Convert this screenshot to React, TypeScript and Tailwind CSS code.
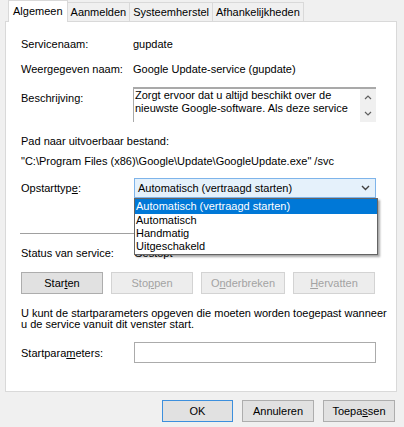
import React from 'react'

const tabs = ['Algemeen', 'Aanmelden', 'Systeemherstel', 'Afhankelijkheden']

function Btn({ children, disabled, def, w }: { children: React.ReactNode; disabled?: boolean; def?: boolean; w: string }) {
  return (
    <div
      className={`${w} h-[22px] flex items-center justify-center border ${
        disabled
          ? 'bg-[#EDEDED] border-[#D3D3D3] text-[#A3A3A3]'
          : def
          ? 'bg-[#E1E1E1] border-[#3C8FDD] text-black'
          : 'bg-[#E1E1E1] border-[#ADADAD] text-black'
      }`}>
      {children}
    </div>
  )
}

export default function App() {
  return (
    <div
      className="w-[404px] h-[427px] bg-[#F0F0F0] text-[11px] leading-[14px] text-black overflow-hidden"
      style={{ fontFamily: '"Liberation Sans", Arial, sans-serif' }}>
      {/* tabs */}
      <div className="flex items-end h-[22px] pl-[8px] relative z-10">
        {tabs.map((t, i) =>
          i === 0 ? (
            <div
              key={t}
              className="h-[22px] px-[4px] bg-white border border-b-0 border-[#D9D9D9] flex items-start pt-[3px]">
              {t}
            </div>
          ) : (
            <div
              key={t}
              className="h-[19px] px-[3px] bg-[#F0F0F0] border border-l-0 border-b-0 border-[#D9D9D9] flex items-center mb-[1px]">
              {t}
            </div>
          )
        )}
      </div>

      {/* panel */}
      <div className="relative mx-[5px] mt-[-1px] w-[392px] h-[371px] bg-white border border-[#D9D9D9] pl-[15px] pr-[19px]">
        <div className="flex mt-[15px]">
          <div className="w-[112px]">Servicenaam:</div>
          <div>gupdate</div>
        </div>
        <div className="flex mt-[11px]">
          <div className="w-[112px]">Weergegeven naam:</div>
          <div>Google Update-service (gupdate)</div>
        </div>
        <div className="flex mt-[11px]">
          <div className="w-[112px] pt-[4px]">Beschrijving:</div>
          <div className="w-[243px] h-[35px] flex border-t-2 border-l border-[#A9A9A9] bg-white">
            <div className="flex-1 pl-[1px] leading-[13px]">
              Zorgt ervoor dat u altijd beschikt over de
              <br />
              nieuwste Google-software. Als deze service
            </div>
            <div className="w-[16px] bg-[#F0F0F0] flex flex-col items-center justify-around">
              <svg width="8" height="5" viewBox="0 0 8 5">
                <path d="M1 4 L4 1 L7 4" fill="none" stroke="#606060" strokeWidth="1.2" />
              </svg>
              <svg width="8" height="5" viewBox="0 0 8 5">
                <path d="M1 1 L4 4 L7 1" fill="none" stroke="#606060" strokeWidth="1.2" />
              </svg>
            </div>
          </div>
        </div>
        <div className="mt-[12px]">Pad naar uitvoerbaar bestand:</div>
        <div className="mt-[6px]">"C:\Program Files (x86)\Google\Update\GoogleUpdate.exe" /svc</div>
        <div className="flex mt-[10px]">
          <div className="w-[113px] pt-[3px]">
            Opstarttyp<span className="underline">e</span>:
          </div>
          <div className="relative">
            <div className="w-[242px] h-[20px] bg-[#E5F1FB] border border-[#7EB4EA] flex items-center pl-[3px] pr-[5px]">
              <div className="flex-1">Automatisch (vertraagd starten)</div>
              <svg width="9" height="6" viewBox="0 0 9 6">
                <path d="M1 1 L4.5 4.5 L8 1" fill="none" stroke="#404040" strokeWidth="1.4" />
              </svg>
            </div>
            {/* open list */}
            <div className="absolute left-0 top-[20px] w-[244px] bg-white border border-[#646464] shadow-[2px_2px_2px_rgba(0,0,0,0.35)] z-20 leading-[13px]">
              <div className="bg-[#0078D7] text-white h-[15px] pl-[1px] pt-[1px]">Automatisch (vertraagd starten)</div>
              <div className="pl-[1px]">Automatisch</div>
              <div className="pl-[1px]">Handmatig</div>
              <div className="pl-[1px] pb-[1px]">Uitgeschakeld</div>
            </div>
          </div>
        </div>
        <div className="mt-[35px] h-[1px] bg-[#A0A0A0] w-[356px] ml-[-1px]" />
        <div className="flex mt-[12px]">
          <div className="w-[113px]">Status van service:</div>
          <div>Gestopt</div>
        </div>
        <div className="flex mt-[12px] gap-[8px]">
          <Btn w="w-[82px]">
            Star<span className="underline">t</span>en
          </Btn>
          <Btn w="w-[82px]" disabled>
            Sto<span className="underline">p</span>pen
          </Btn>
          <Btn w="w-[84px]" disabled>
            O<span className="underline">n</span>derbreken
          </Btn>
          <Btn w="w-[82px]" disabled>
            <span className="underline">H</span>ervatten
          </Btn>
        </div>
        <div className="mt-[14px] leading-[11px] whitespace-nowrap">
          U kunt de startparameters opgeven die moeten worden toegepast wanneer
          <br />u de service vanuit dit venster start.
        </div>
        <div className="flex items-center mt-[12px]">
          <div className="w-[113px]">
            Startpara<span className="underline">m</span>eters:
          </div>
          <div className="w-[242px] h-[21px] bg-white border border-[#ABABAB]" />
        </div>
      </div>

      {/* dialog buttons */}
      <div className="flex justify-end gap-[9px] pr-[9px] mt-[8px]">
        <Btn w="w-[71px]" def>
          OK
        </Btn>
        <Btn w="w-[72px]">Annuleren</Btn>
        <Btn w="w-[72px]">
          Toepa<span className="underline">s</span>sen
        </Btn>
      </div>
    </div>
  )
}
